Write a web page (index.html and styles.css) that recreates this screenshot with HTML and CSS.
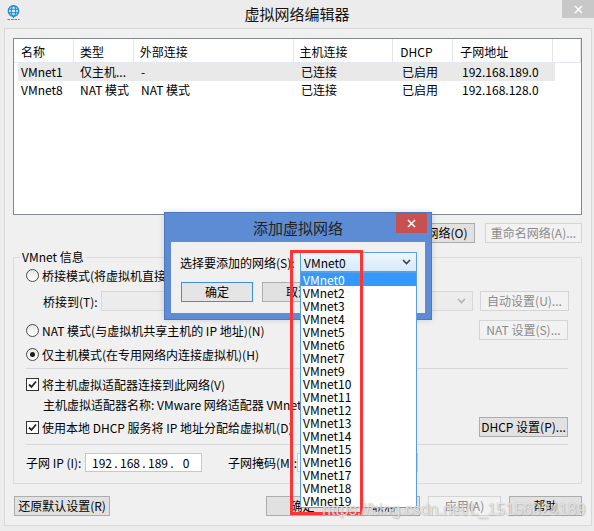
FILE: index.html
```html
<!DOCTYPE html>
<html lang="zh-CN">
<head>
<meta charset="utf-8">
<title>虚拟网络编辑器</title>
<link rel="stylesheet" href="styles.css">
</head>
<body>
<div class="window">
  <div class="titlebar">
    <div class="tb-left">
      <svg class="app-icon" width="14" height="16" viewBox="0 0 14 16">
        <circle cx="6.5" cy="6" r="5.2" fill="#dff0fb" stroke="#1b8fd6" stroke-width="1.4"/>
        <ellipse cx="6.5" cy="6" rx="2.2" ry="5.2" fill="none" stroke="#1b8fd6" stroke-width="1.2"/>
        <line x1="1.3" y1="4.3" x2="11.7" y2="4.3" stroke="#1b8fd6" stroke-width="1.1"/>
        <line x1="1.3" y1="7.7" x2="11.7" y2="7.7" stroke="#1b8fd6" stroke-width="1.1"/>
        <line x1="6.5" y1="11" x2="6.5" y2="13.2" stroke="#1b8fd6" stroke-width="1.2"/>
        <line x1="0.5" y1="14.5" x2="12.5" y2="14.5" stroke="#1aa89a" stroke-width="1.2" stroke-dasharray="2.5 1"/>
      </svg>
    </div>
    <div class="title">虚拟网络编辑器</div>
    <div class="tb-right">
      <div class="close">
        <svg width="9" height="9" viewBox="0 0 9 9"><path d="M1 1L8 8M8 1L1 8" stroke="#fff" stroke-width="1.6"/></svg>
      </div>
    </div>
  </div>

  <div class="client">
    <div class="listview">
      <div class="lv-header">
        <div class="hc hc1">名称</div>
        <div class="hc hc2">类型</div>
        <div class="hc hc3">外部连接</div>
        <div class="hc hc4">主机连接</div>
        <div class="hc hc5">DHCP</div>
        <div class="hc hc6">子网地址</div>
        <div class="hc hc7"></div>
      </div>
      <div class="lv-row sel">
        <div class="rc rc1">VMnet1</div>
        <div class="rc rc2">仅主机...</div>
        <div class="rc rc3">-</div>
        <div class="rc rc4">已连接</div>
        <div class="rc rc5">已启用</div>
        <div class="rc rc6">192.168.189.0</div>
      </div>
      <div class="lv-row">
        <div class="rc rc1">VMnet8</div>
        <div class="rc rc2">NAT 模式</div>
        <div class="rc rc3">NAT 模式</div>
        <div class="rc rc4">已连接</div>
        <div class="rc rc5">已启用</div>
        <div class="rc rc6">192.168.128.0</div>
      </div>
    </div>

    <div class="list-buttons">
      <button class="btn w-add">添加网络(E)...</button>
      <button class="btn w-remove">移除网络(O)</button>
      <button class="btn w-rename" disabled>重命名网络(A)...</button>
    </div>

    <fieldset class="group">
      <legend class="legend">VMnet 信息</legend>

      <div class="row">
        <span class="radio"></span><span>桥接模式(将虚拟机直接连接到外部网络)(B)</span>
      </div>

      <div class="row row-bridge">
        <span class="bridge-label">桥接到(T):</span>
        <div class="combo-disabled">
          <svg width="9" height="6" viewBox="0 0 9 6"><path d="M1 1L4.5 4.5L8 1" fill="none" stroke="#b4b4b4" stroke-width="1.6"/></svg>
        </div>
        <button class="btn w-side" disabled>自动设置(U)...</button>
      </div>

      <div class="row row-nat">
        <span class="radio"></span><span class="grow">NAT 模式(与虚拟机共享主机的 IP 地址)(N)</span>
        <button class="btn w-side" disabled>NAT 设置(S)...</button>
      </div>

      <div class="row row-host">
        <span class="radio checked"></span><span>仅主机模式(在专用网络内连接虚拟机)(H)</span>
      </div>

      <div class="sep sep1"></div>

      <div class="row row-check1">
        <span class="check"><svg width="11" height="11" viewBox="0 0 11 11"><path d="M2 5.5L4.5 8L9 2.5" fill="none" stroke="#222" stroke-width="1.8"/></svg></span>
        <span>将主机虚拟适配器连接到此网络(V)</span>
      </div>

      <div class="row row-adapter">
        <span>主机虚拟适配器名称: VMware 网络适配器 VMnet1</span>
      </div>

      <div class="row row-dhcp">
        <span class="check"><svg width="11" height="11" viewBox="0 0 11 11"><path d="M2 5.5L4.5 8L9 2.5" fill="none" stroke="#222" stroke-width="1.8"/></svg></span>
        <span class="grow">使用本地 DHCP 服务将 IP 地址分配给虚拟机(D)</span>
        <button class="btn w-side">DHCP 设置(P)...</button>
      </div>

      <div class="sep sep2"></div>

      <div class="row row-subnet">
        <span class="ip-label">子网 IP (I):</span>
        <div class="ipbox ip-subnet">
          <span class="oct">192</span><span class="dot">.</span><span class="oct">168</span><span class="dot">.</span><span class="oct">189</span><span class="dot">.</span><span class="oct">0</span>
        </div>
        <span class="mask-label">子网掩码(M):</span>
        <div class="ipbox ip-mask"></div>
      </div>
    </fieldset>

    <div class="bottom-buttons">
      <button class="btn w-restore">还原默认设置(R)</button>
      <div class="grow"></div>
      <button class="btn w-bottom">确定</button>
      <button class="btn w-bottom">取消</button>
      <button class="btn w-bottom" disabled>应用(A)</button>
      <button class="btn w-bottom">帮助</button>
    </div>
  </div>

  <div class="dialog">
    <div class="dlg-titlebar">
      <div></div>
      <div class="dlg-title">添加虚拟网络</div>
      <div class="dlg-close">
        <svg width="9" height="9" viewBox="0 0 9 9"><path d="M1 1L8 8M8 1L1 8" stroke="#fff" stroke-width="1.6"/></svg>
      </div>
    </div>
    <div class="dlg-client">
      <div class="dlg-row">
        <span class="dlg-label">选择要添加的网络(S):</span>
        <div class="combo-wrap">
          <div class="combo-active">
            <span>VMnet0</span>
            <svg width="9" height="6" viewBox="0 0 9 6"><path d="M1 1L4.5 4.5L8 1" fill="none" stroke="#404040" stroke-width="1.6"/></svg>
          </div>
          <ul class="dropdown">
            <li class="cur">VMnet0</li>
            <li>VMnet2</li>
            <li>VMnet3</li>
            <li>VMnet4</li>
            <li>VMnet5</li>
            <li>VMnet6</li>
            <li>VMnet7</li>
            <li>VMnet9</li>
            <li>VMnet10</li>
            <li>VMnet11</li>
            <li>VMnet12</li>
            <li>VMnet13</li>
            <li>VMnet14</li>
            <li>VMnet15</li>
            <li>VMnet16</li>
            <li>VMnet17</li>
            <li>VMnet18</li>
            <li>VMnet19</li>
          </ul>
        </div>
      </div>
      <div class="dlg-row dlg-buttons">
        <button class="btn w-dlg default">确定</button>
        <button class="btn w-dlg">取消</button>
      </div>
    </div>
  </div>

  <div class="annotation"></div>
  <div class="watermark">https://blog.csdn.net/L_15156024189</div>
</div>
</body>
</html>
```

FILE: styles.css
```css
* { box-sizing: border-box; }

html, body {
  margin: 0;
  padding: 0;
}

body {
  width: 594px;
  height: 531px;
  overflow: hidden;
  font-family: "Noto Sans CJK SC", "Microsoft YaHei", sans-serif;
  font-size: 12px;
  color: #000;
}

.window {
  position: relative;
  width: 594px;
  height: 531px;
  background: #ececec;
}

/* title bar */
.titlebar {
  height: 28px;
  display: grid;
  grid-template-columns: 1fr auto 1fr;
  align-items: start;
}

.app-icon {
  display: block;
  margin: 5px 0 0 7px;
}

.title {
  font-size: 15px;
  line-height: 28px;
  color: #111;
}

.tb-right {
  display: flex;
  justify-content: flex-end;
}

.close {
  width: 32px;
  height: 18px;
  background: #c8c8c8;
  display: flex;
  align-items: center;
  justify-content: center;
}

/* client area */
.client {
  margin: 0 2px 0 4px;
  height: 498px;
  border: 1px solid #d9d9d9;
  background: #f0f0f0;
  padding: 9px 9px 0 8px;
  display: flex;
  flex-direction: column;
}

.grow { flex: 1; }

/* list view */
.listview {
  height: 177px;
  flex: none;
  border: 1px solid #828790;
  background: #fff;
}

.lv-header {
  display: flex;
  height: 24px;
  border-bottom: 1px solid #e3e8ee;
}

.hc {
  border-right: 1px solid #e5e5e5;
  padding: 3px 0 0 6px;
  line-height: 20px;
  white-space: nowrap;
}

.hc1 { width: 60px; padding-left: 7px; }
.hc2 { width: 60px; }
.hc3 { width: 160px; }
.hc4 { width: 100px; }
.hc5 { width: 60px; padding-left: 7px; }
.hc6 { width: 100px; padding-left: 7px; }
.hc7 { width: 28px; }

.lv-row {
  display: flex;
  height: 18px;
  width: 537px;
  margin-left: 4px;
  line-height: 18px;
}

.lv-row.sel { background: #e9e9e9; }

.rc { white-space: nowrap; overflow: hidden; }
.rc1 { width: 56px; padding-left: 3px; }
.rc2 { width: 60px; padding-left: 6px; }
.rc3 { width: 160px; padding-left: 7px; }
.rc4 { width: 100px; padding-left: 7px; }
.rc5 { width: 60px; padding-left: 8px; }
.rc6 { width: 100px; padding-left: 8px; }

/* buttons */
.btn {
  height: 20px;
  border: 1px solid #adadad;
  background: #e1e1e1;
  font-family: inherit;
  font-size: 12px;
  line-height: 18px;
  color: #000;
  padding: 0;
  margin: 0;
  flex: none;
  white-space: nowrap;
}

.btn:disabled {
  border-color: #d4d4d4;
  background: #f2f2f2;
  color: #8a8a8a;
}

.list-buttons {
  display: flex;
  justify-content: flex-end;
  gap: 10px;
  margin-top: 8px;
}

.w-add { width: 90px; }
.w-remove { width: 80px; }
.w-rename { width: 97px; }
.w-side { width: 89px; }
.w-restore { width: 96px; margin-left: 1px; }
.w-bottom { width: 73px; }
.w-dlg { width: 72px; }

/* group box */
.group {
  margin: 7px 0 0 0;
  border: 1px solid #dcdcdc;
  padding: 1px 13px 11px 12px;
  min-width: 0;
}

.legend {
  padding: 0 2px;
  margin-left: -6px;
  line-height: 14px;
  height: 14px;
}

.row {
  display: flex;
  align-items: center;
  height: 20px;
  white-space: nowrap;
}

.row-bridge { margin-top: 6px; padding-left: 17px; }
.row-nat { margin-top: 9px; }
.row-host { margin-top: 4px; }
.row-check1 { margin-top: 5px; }
.row-adapter { padding-left: 17px; }
.row-dhcp { margin-top: 3px; }
.row-subnet { margin-top: 7px; }

.sep {
  height: 1px;
  background: #d7d7d7;
}
.sep1 { margin-top: 4px; }
.sep2 { margin-top: 7px; }

.radio {
  width: 13px;
  height: 13px;
  border-radius: 50%;
  border: 1px solid #4a4a4a;
  background: linear-gradient(#e6e6e6, #ffffff);
  margin-right: 3px;
  flex: none;
  display: flex;
  align-items: center;
  justify-content: center;
}

.radio.checked::after {
  content: "";
  width: 5px;
  height: 5px;
  border-radius: 50%;
  background: #1a1a1a;
}

.check {
  width: 13px;
  height: 13px;
  border: 1px solid #333;
  background: #fff;
  margin-right: 3px;
  flex: none;
  display: flex;
  align-items: center;
  justify-content: center;
}

.bridge-label { width: 58px; flex: none; }

.combo-disabled {
  width: 372px;
  height: 20px;
  margin-right: 7px;
  border: 1px solid #d9d9d9;
  background: #ececec;
  display: flex;
  align-items: center;
  justify-content: flex-end;
  padding-right: 6px;
  flex: none;
}

.ip-label { width: 59px; flex: none; }
.mask-label { width: 69px; margin-left: 26px; flex: none; }

.ipbox {
  height: 19px;
  border: 1px solid #c8c8c8;
  background: #fff;
  display: flex;
  align-items: center;
  padding-left: 6px;
  flex: none;
  line-height: 17px;
}

.ip-subnet { width: 117px; }
.ip-mask { width: 121px; }

.oct { width: 20px; text-align: center; }
.dot { width: 8px; text-align: center; }

.bottom-buttons {
  display: flex;
  gap: 8px;
  margin-top: 12px;
}

/* modal dialog */
.dialog {
  position: absolute;
  left: 164px;
  top: 212px;
  width: 268px;
  height: 108px;
  background: #5e8cd4;
  border: 1px solid #4c78bd;
  box-shadow: 0 0 6px rgba(0, 0, 0, 0.15);
}

.dlg-titlebar {
  height: 29px;
  display: grid;
  grid-template-columns: 1fr auto 1fr;
  align-items: start;
}

.dlg-title {
  font-size: 15px;
  line-height: 29px;
  color: #222;
}

.dlg-close {
  justify-self: end;
  margin-right: 4px;
  width: 31px;
  height: 20px;
  background: #c75050;
  display: flex;
  align-items: center;
  justify-content: center;
}

.dlg-client {
  margin: 0 6px;
  height: 71px;
  background: #f0f0f0;
  padding: 10px 0 0 9px;
}

.dlg-row {
  display: flex;
  align-items: center;
  height: 20px;
  white-space: nowrap;
}

.dlg-label { width: 120px; flex: none; }

.combo-wrap {
  position: relative;
  width: 117px;
  height: 20px;
}

.combo-active {
  height: 20px;
  border: 1px solid #5a9fe4;
  background: linear-gradient(#eef6fd, #d6e9fb);
  display: flex;
  align-items: center;
  justify-content: space-between;
  padding: 0 5px 0 3px;
}

.dropdown {
  position: absolute;
  left: 0;
  top: 20px;
  width: 117px;
  margin: 0;
  padding: 0;
  list-style: none;
  background: #fff;
  border: 1px solid #5a9fe4;
  z-index: 2;
}

.dropdown li {
  height: 13px;
  line-height: 13px;
  padding-left: 2px;
}

.dropdown li.cur {
  background: #3399ff;
  color: #fff;
}

.dlg-buttons {
  margin-top: 10px;
  gap: 9px;
  padding-left: 1px;
}

.btn.default {
  border-color: #3c8ee0;
  background: #e5e5e5;
}

/* annotation + watermark */
.annotation {
  position: absolute;
  left: 290px;
  top: 250px;
  width: 73px;
  height: 265px;
  border: 3px solid #ff3535;
  z-index: 5;
}

.watermark {
  position: absolute;
  left: 322px;
  top: 500px;
  font-family: "Liberation Sans", Arial, sans-serif;
  font-size: 16px;
  line-height: 20px;
  color: rgba(255, 255, 255, 0.7);
  text-shadow: 0 0 1px rgba(120, 120, 120, 0.6), 1px 1px 1px rgba(140, 140, 140, 0.35);
  white-space: nowrap;
  z-index: 6;
}
```
